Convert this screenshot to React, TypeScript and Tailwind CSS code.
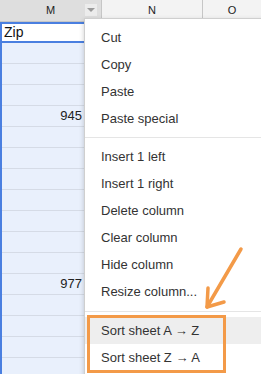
import React from "react";

const rows = ["Zip", "", "", "", "945", "", "", "", "", "", "", "", "977", "", "", "", ""];

const groups = [
  ["Cut", "Copy", "Paste", "Paste special"],
  ["Insert 1 left", "Insert 1 right", "Delete column", "Clear column", "Hide column", "Resize column..."],
  ["Sort sheet A \u2192 Z", "Sort sheet Z \u2192 A"],
];

export default function App() {
  return (
    <div className="relative h-[374px] w-[261px] overflow-hidden bg-white font-['Liberation_Sans',Arial,sans-serif]">
      {/* column headers */}
      <div className="flex h-[22px] border-b border-[#c6c6c6] text-[11px] text-[#222]">
        <div className="relative flex w-[102px] items-center justify-center border-r border-[#c6c6c6] bg-[#dedede]">
          M
          <div className="absolute left-[85px] top-[4px] flex h-[12px] w-[12px] items-center justify-center bg-[#ececec]">
            <div className="h-0 w-0 border-x-[4px] border-t-[4px] border-x-transparent border-t-[#9a9a9a]" />
          </div>
        </div>
        <div className="flex w-[101px] items-center justify-center border-r border-[#c6c6c6] bg-[#f3f3f3]">N</div>
        <div className="flex flex-1 items-center justify-center bg-[#f3f3f3]">O</div>
      </div>

      {/* column M cells */}
      <div className="w-[102px] border-l-2 border-[#4a7fe0] bg-[#e9f0fc]">
        {rows.map((v, i) =>
          i === 0 ? (
            <div key={i} className="flex h-[21px] items-center border-2 border-[#4a7fe0] bg-white pl-[2px] text-[14px] text-[#111] -ml-[2px]">
              {v}
            </div>
          ) : (
            <div key={i} className="flex h-[21px] items-center justify-end border-b border-[#d5dbe6] pr-[20px] text-[13px] text-[#222]">
              {v}
            </div>
          )
        )}
      </div>

      {/* context menu */}
      <div className="absolute left-[84px] top-[18px] w-[200px] border border-[#cfcfcf] bg-white py-[5px] shadow-[0_2px_5px_rgba(0,0,0,0.2)]">
        {groups.map((g, gi) => (
          <div key={gi}>
            {gi === 1 && <div className="my-[5px] h-px bg-[#e5e5e5]" />}
            {gi === 2 && <div className="mb-[5px] mt-[6px] h-px bg-[#e5e5e5]" />}
            {g.map((t) => (
              <div
                key={t}
                className={`flex h-[27px] items-center pl-[16px] text-[13px] text-[#333] ${t === "Sort sheet A \u2192 Z" ? "bg-[#eeeeee]" : ""}`}
              >
                {t}
              </div>
            ))}
          </div>
        ))}
      </div>

      {/* orange highlight box */}
      <div className="absolute left-[87px] top-[315px] h-[58px] w-[139px] border-[3px] border-[#f39a48]" />

      {/* orange arrow */}
      <svg className="absolute left-0 top-0" width="261" height="374" viewBox="0 0 261 374">
        <g stroke="#f39a48" strokeWidth="3.5" strokeLinecap="round" strokeLinejoin="round" fill="none">
          <line x1="241" y1="249" x2="207" y2="307" />
          <polyline points="208,288 207,307 224,302" />
        </g>
      </svg>
    </div>
  );
}
